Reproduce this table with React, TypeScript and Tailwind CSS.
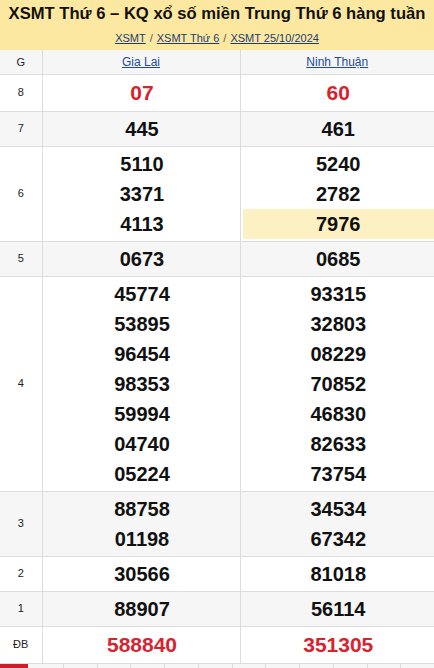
const rows = [
  { label: "8", left: ["07"], right: ["60"], red: true, gray: false },
  { label: "7", left: ["445"], right: ["461"], gray: true },
  { label: "6", left: ["5110", "3371", "4113"], right: ["5240", "2782", "7976"], gray: false, hl: 2 },
  { label: "5", left: ["0673"], right: ["0685"], gray: true },
  {
    label: "4",
    left: ["45774", "53895", "96454", "98353", "59994", "04740", "05224"],
    right: ["93315", "32803", "08229", "70852", "46830", "82633", "73754"],
    gray: false,
  },
  { label: "3", left: ["88758", "01198"], right: ["34534", "67342"], gray: true },
  { label: "2", left: ["30566"], right: ["81018"], gray: false },
  { label: "1", left: ["88907"], right: ["56114"], gray: true },
  { label: "ĐB", left: ["588840"], right: ["351305"], red: true, gray: false },
];

type Row = (typeof rows)[number] & { red?: boolean; hl?: number };

function Numbers({ items, red, hl }: { items: string[]; red?: boolean; hl?: number }) {
  return (
    <div className="flex flex-col pl-[2px] py-[2px]">
      {items.map((n, i) => (
        <div
          key={i}
          className={`text-center font-bold ${
            red ? "text-[21px] leading-[32px] text-[#d8232f]" : "text-[20px] leading-[30px] text-[#111]"
          } ${hl === i ? "bg-[#fdf0c2]" : ""}`}
        >
          {n}
        </div>
      ))}
    </div>
  );
}

export default function App() {
  return (
    <div className="w-[434px] bg-white" style={{ fontFamily: '"Liberation Sans", Arial, sans-serif' }}>
      {/* Header */}
      <div className="h-[50px] bg-[#fde8a2] flex flex-col items-center pt-[4px]">
        <h1 className="text-[16.6px] leading-[20px] font-bold text-[#111] whitespace-nowrap">
          XSMT Thứ 6 – KQ xổ số miền Trung Thứ 6 hàng tuần
        </h1>
        <div className="mt-[8px] text-[11px] leading-[13px] text-[#555] flex gap-[4px]">
          <a className="underline text-[#1c3c72]">XSMT</a>
          <span>/</span>
          <a className="underline text-[#1c3c72]">XSMT Thứ 6</a>
          <span>/</span>
          <a className="underline text-[#1c3c72]">XSMT 25/10/2024</a>
        </div>
      </div>

      {/* Table */}
      <table className="w-full border-collapse table-fixed">
        <colgroup>
          <col className="w-[42px]" />
          <col className="w-[198px]" />
          <col />
        </colgroup>
        <thead>
          <tr className="h-[24px] bg-[#f6f6f6] border-b border-[#dcdcdc]">
            <th className="text-[11px] font-normal text-[#222] border-r border-[#dcdcdc]">G</th>
            <th className="text-[12px] font-normal border-r border-[#dcdcdc]">
              <a className="underline text-[#1f4aa0]">Gia Lai</a>
            </th>
            <th className="text-[12px] font-normal">
              <a className="underline text-[#1f4aa0]">Ninh Thuận</a>
            </th>
          </tr>
        </thead>
        <tbody>
          {(rows as Row[]).map((r) => (
            <tr key={r.label} className={`border-b border-[#dcdcdc] ${r.gray ? "bg-[#f6f6f6]" : "bg-white"}`}>
              <td className="text-center text-[11px] text-[#222] border-r border-[#dcdcdc] align-middle">{r.label}</td>
              <td className="border-r border-[#dcdcdc] p-0">
                <Numbers items={r.left} red={r.red} />
              </td>
              <td className="p-0">
                <Numbers items={r.right} red={r.red} hl={r.hl} />
              </td>
            </tr>
          ))}
        </tbody>
      </table>

      {/* Bottom tabs */}
      <div className="flex h-[30px] bg-[#f6f6f6]">
        <div className="w-[28px] bg-[#c8202a]" />
        <div className="w-[36px]" />
        {Array.from({ length: 11 }).map((_, i) => (
          <div key={i} className="w-[34.3px] border-l border-[#dcdcdc]" />
        ))}
      </div>
    </div>
  );
}
